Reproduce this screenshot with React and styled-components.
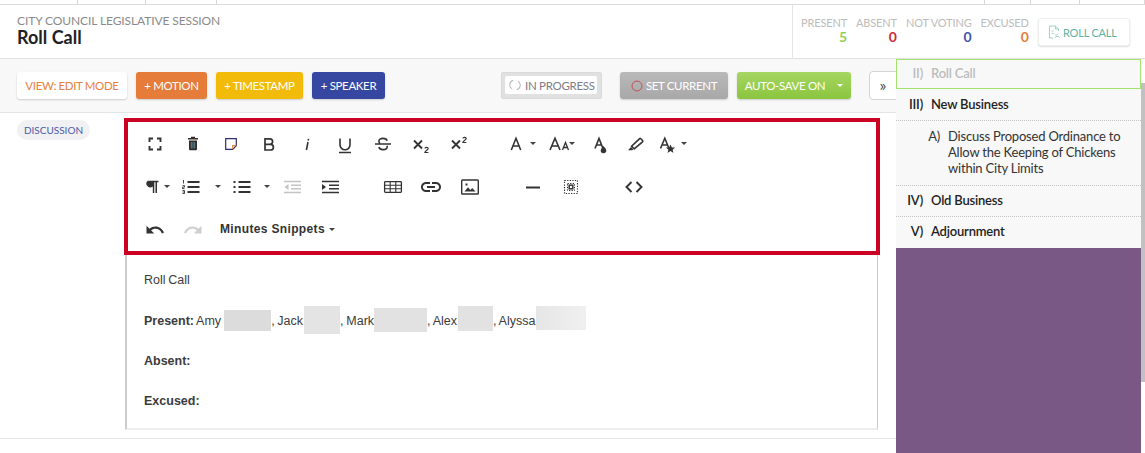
import React from "react";
import styled, { createGlobalStyle } from "styled-components";

const GlobalStyle = createGlobalStyle`
  html, body { margin: 0; padding: 0; background: #fff; }
  body { font-family: "Lato", "Liberation Sans", sans-serif; }
  * { box-sizing: border-box; }
`;

const Page = styled.div`
  width: 1145px;
  height: 453px;
  overflow: hidden;
  display: flex;
  flex-direction: column;
`;

const TopStrip = styled.div`
  height: 5px;
  display: flex;
  border-bottom: 1px solid #dcdcdc;
`;
const StripCell = styled.div`
  width: ${(p) => p.$w}px;
  flex: ${(p) => (p.$grow ? 1 : "none")};
  border-right: ${(p) => (p.$grow ? "none" : "1px solid #d8d8d8")};
`;

const Header = styled.header`
  height: 54px;
  display: flex;
  justify-content: space-between;
  border-bottom: 1px solid #e2e2e2;
`;
const TitleBlock = styled.div`
  padding: 10px 0 0 17px;
`;
const Session = styled.div`
  font-size: 12px;
  line-height: 12px;
  color: #8a8a8a;
  letter-spacing: -0.1px;
`;
const Title = styled.h1`
  margin: 0;
  font-size: 18px;
  line-height: 20px;
  font-weight: 700;
  color: #222;
`;
const StatsBlock = styled.div`
  width: 353px;
  display: flex;
  border-left: 1px solid #e4e4e4;
  padding: 12px 15px 0 8px;
`;
const Stat = styled.div`
  margin-right: ${(p) => p.$mr}px;
  text-align: right;
`;
const StatLabel = styled.div`
  font-size: 11px;
  line-height: 12px;
  color: #bcbcbc;
  letter-spacing: -0.15px;
`;
const StatValue = styled.div`
  font-size: 14px;
  line-height: 15px;
  font-weight: 700;
  color: ${(p) => p.$color};
`;
const RollCallButton = styled.button`
  width: 92px;
  height: 28px;
  margin: 1px 0 0 auto;
  display: flex;
  align-items: center;
  gap: 2px;
  padding: 0 0 0 8px;
  background: #fff;
  border: 1px solid #efefef;
  border-radius: 3px;
  box-shadow: 0 1px 2px rgba(0, 0, 0, 0.14);
  font: 11px "Lato", sans-serif;
  letter-spacing: -0.2px;
  color: #5fb3a1;
`;

const Body = styled.div`
  flex: 1;
  display: flex;
  min-height: 0;
`;
const Main = styled.main`
  width: 896px;
  display: flex;
  flex-direction: column;
`;
const ActionBar = styled.div`
  height: 54px;
  flex: none;
  display: flex;
  align-items: center;
  padding: 0 0 0 17px;
  background: #f8f8f8;
  border-bottom: 1px solid #e4e4e4;
  overflow: hidden;
`;
const ActionButton = styled.button`
  height: 27px;
  width: ${(p) => p.$w}px;
  margin-left: ${(p) => p.$ml || 0}px;
  flex: none;
  display: flex;
  align-items: center;
  justify-content: center;
  gap: ${(p) => p.$gap || 0}px;
  padding: 0;
  border: none;
  border-radius: 3px;
  background: ${(p) => p.$bg};
  color: ${(p) => p.$color || "#fff"};
  box-shadow: 0 1px 2px rgba(0, 0, 0, 0.18);
  font: 11.5px "Lato", sans-serif;
  letter-spacing: -0.35px;
`;
const ProgressFrame = styled.div`
  width: 101px;
  height: 27px;
  margin-left: 116px;
  flex: none;
  padding: 3px 4px 4px 3px;
  background: #e1e1e1;
  border-radius: 2px;
  border: 1px solid #dadada;
`;
const ProgressInner = styled.div`
  height: 100%;
  display: flex;
  align-items: center;
  gap: 4px;
  padding-left: 4px;
  background: #fff;
  border-radius: 2px;
  font-size: 11.5px;
  letter-spacing: -0.3px;
  white-space: nowrap;
  color: #7c7c88;
`;
const Chevrons = styled.button`
  width: 40px;
  height: 29px;
  margin-left: 18px;
  flex: none;
  padding: 0 12px 3px 0;
  background: #fff;
  border: 1px solid #d4d4d4;
  border-radius: 4px;
  font: 16px "Lato", sans-serif;
  color: #444;
`;
const SmallCaret = styled.span`
  display: inline-block;
  width: 0;
  height: 0;
  margin-left: ${(p) => p.$ml || 0}px;
  border-left: 3px solid transparent;
  border-right: 3px solid transparent;
  border-top: 3px solid ${(p) => p.$color || "#444"};
`;

const Content = styled.div`
  flex: 1;
  margin-bottom: 14px;
  display: flex;
  border-bottom: 1px solid #e8e8e8;
`;
const TagColumn = styled.div`
  width: 124px;
  flex: none;
  padding: 7px 0 0 17px;
`;
const Tag = styled.div`
  width: 73px;
  height: 20px;
  line-height: 20px;
  text-align: center;
  background: #f1f1f3;
  border-radius: 10px;
  font-size: 10px;
  color: #4a5ba8;
`;
const EditorColumn = styled.div`
  width: 756px;
  padding-top: 5px;
`;
const ToolFrame = styled.div`
  height: 137px;
  border: 4px solid #cc0022;
`;
const ToolRow = styled.div`
  height: 43px;
  display: flex;
  align-items: center;
  padding-left: 8px;
`;
const ToolButton = styled.div`
  width: ${(p) => p.$w || 38}px;
  margin-left: ${(p) => p.$ml || 0}px;
  height: 28px;
  flex: none;
  display: flex;
  align-items: center;
  justify-content: ${(p) => p.$justify || "center"};
`;
const IconSvg = styled.svg.attrs({ viewBox: "0 0 24 24" })`
  width: 24px;
  height: 24px;
  flex: none;
  color: ${(p) => p.$color || "#333"};
  fill: none;
  stroke: currentColor;
  stroke-width: ${(p) => p.$sw || 1.6};
`;
const Solid = styled.path`
  fill: currentColor;
  stroke: none;
`;
const Snippets = styled.span`
  font: 700 12px "Liberation Sans", sans-serif;
  color: #333;
  margin-left: 8px;
  padding-bottom: 2px;
  white-space: nowrap;
  letter-spacing: 0.35px;
`;
const EditorBody = styled.div`
  width: 753px;
  height: 175px;
  margin-left: 1px;
  padding: 5px 0 0 17px;
  border-left: 2px solid #ccc;
  border-right: 1px solid #ccc;
  border-bottom: 2px solid #eee;
  font-family: "Liberation Sans", Arial, sans-serif;
  font-size: 12.5px;
  word-spacing: -0.7px;
  color: #3c3c3c;
`;
const Line = styled.p`
  margin: 0;
  height: 40px;
  line-height: 40px;
  white-space: nowrap;
  &:first-child {
    margin-bottom: 1px;
  }
`;
const Redacted = styled.span`
  display: inline-block;
  width: ${(p) => p.$w}px;
  height: ${(p) => p.$h}px;
  margin-left: ${(p) => p.$ml || 0}px;
  vertical-align: ${(p) => p.$va}px;
  background: ${(p) => p.$bg};
`;

const Side = styled.aside`
  position: relative;
  width: 249px;
  flex: none;
  padding-right: 4px;
  display: flex;
  flex-direction: column;
`;
const ScrollThumb = styled.div`
  position: absolute;
  top: 24px;
  right: 0;
  width: 4px;
  height: 299px;
  background: #c1c1c1;
`;
const AgendaList = styled.div`
  background: #f8f8f8;
  flex: none;
`;
const AgendaItem = styled.div`
  display: flex;
  height: ${(p) => p.$h || 31}px;
  padding-top: ${(p) => p.$pt || 7}px;
  font-size: 13px;
  line-height: 16px;
  font-weight: ${(p) => (p.$sub ? 400 : 600)};
  color: ${(p) => (p.$active ? "#bcbcbc" : p.$sub ? "#333" : "#222")};
  letter-spacing: -0.2px;
  border: ${(p) => (p.$active ? "1px solid #a5e36f" : "none")};
  border-bottom: ${(p) => (p.$active ? "1px solid #a5e36f" : p.$dotted ? "1px dotted #c4c4c4" : "none")};
`;
const AgendaNumber = styled.span`
  width: ${(p) => p.$w}px;
  flex: none;
  text-align: right;
`;
const AgendaText = styled.span`
  margin-left: 8px;
  width: ${(p) => p.$w || 200}px;
`;
const Purple = styled.div`
  flex: 1;
  background: #7a5885;
`;

const Fullscreen = () => (
  <IconSvg $sw={1.9}><path d="M6.5 10V6.5H10M14 6.5h3.5V10M17.5 14v3.5H14M10 17.5H6.5V14" /></IconSvg>
);
const Trash = () => (
  <IconSvg $color="#332a2a">
    <Solid d="M7 6h3V4.8h4V6h3v1.6H7zM8 8.4h8V17a1.2 1.2 0 0 1-1.2 1.2H9.200A1.200 1.200 0 0 1 8 17z" />
    <path d="M10.300 10v6.500M12 10v6.500M13.700 10v6.500" stroke="#5e9fb0" strokeWidth="0.8" />
  </IconSvg>
);
const Note = () => (
  <IconSvg $sw={1.2} $color="#2b2f6e">
    <path d="M6.700 6.700h10.600v7l-3.600 3.600h-7z" />
    <path d="M13.700 17.300v-3.600h3.600" stroke="#d9893f" />
  </IconSvg>
);
const Bold = () => (
  <IconSvg $sw={1.7}><path d="M8 6.800h4.800a2.800 2.800 0 0 1 0 5.600H8zM8 12.400h5.600a2.800 2.800 0 0 1 0 5.600H8z" /></IconSvg>
);
const Italic = () => (
  <IconSvg><path d="M13 10 11.400 18M13.500 6.800l-.3 1.700" /></IconSvg>
);
const Underline = () => (
  <IconSvg><path d="M7 6.500v6.300a5 5 0 0 0 10 0V6.500M6 20.500h12" /></IconSvg>
);
const Strike = () => (
  <IconSvg>
    <path d="M16.200 8.800c-.4-1.500-2-2.400-4.200-2.400-2.400 0-4.100 1.100-4.100 2.800 0 .9.400 1.500 1 2M8 15c.3 1.700 1.800 2.600 4 2.600 2.500 0 4.200-1 4.200-2.800 0-.4-.1-.7-.2-1M4 12h16" />
  </IconSvg>
);
const Subscript = () => (
  <IconSvg>
    <path d="M5 8.500 13 16.500M13 8.500 5 16.500" strokeWidth="1.800" />
    <path d="M15.800 16.400c.3-1.500 3.400-1.500 3.400.2 0 1.300-3.200 2-3.400 3.900h3.600" strokeWidth="1.200" />
  </IconSvg>
);
const Superscript = () => (
  <IconSvg>
    <path d="M5 8.500 13 16.500M13 8.500 5 16.500" strokeWidth="1.800" />
    <path d="M15.800 6.400c.3-1.500 3.400-1.500 3.400.2 0 1.300-3.200 2-3.400 3.900h3.600" strokeWidth="1.200" />
  </IconSvg>
);
const LetterA = () => (
  <IconSvg><path d="M7.300 18 12 6.300 16.700 18M8.800 14h6.400" /></IconSvg>
);
const FontSize = () => (
  <IconSvg>
    <path d="M1 18 6 6.300 11 18M2.600 14h6.800" />
    <path d="M13.500 18l3-7.500 3 7.500M14.500 15.500h4" strokeWidth="1.300" />
  </IconSvg>
);
const FillColor = () => (
  <IconSvg>
    <path d="M7 16.500 11 6.500 15 16.500M8.500 13h5" />
    <Solid d="M15.500 14c1.200 1.800 2.800 3 2.800 4.500a2.800 2.800 0 0 1-5.600 0c0-1.500 1.600-2.700 2.800-4.500z" />
  </IconSvg>
);
const Highlighter = () => (
  <IconSvg>
    <path d="M10.200 16.800 7.600 14.200 15.400 6.800a1 1 0 0 1 1.400 0l1.700 1.700a1 1 0 0 1 0 1.400z" />
    <Solid d="M4 18.200 7 15l2.300 2.300-1 .9z" />
  </IconSvg>
);
const StarA = () => (
  <IconSvg>
    <path d="M5.500 16.500 9.800 6.300 14 16.500M7 13h5.600" />
    <Solid d="M15.500 12.500l1.400 3h3.200l-2.500 2.200.9 3.300-3-1.900-3 1.900.9-3.300-2.500-2.200h3.200z" />
  </IconSvg>
);
const Pilcrow = () => (
  <IconSvg>
    <Solid d="M17.500 5.700v1.500H16V18h-1.500V7.200h-1.200V18h-1.500v-6.300h-.6A3 3 0 0 1 7 5.700z" />
  </IconSvg>
);
const OrderedList = () => (
  <IconSvg $sw={2}>
    <path d="M8.500 7h12M8.500 12h12M8.500 17h12" />
    <path d="M4.500 5v3.500M3.500 10.600h2v1.500h-2v1.500h2M3.500 15.500h2v3h-2M3.500 17h2" strokeWidth="0.900" />
  </IconSvg>
);
const BulletList = () => (
  <IconSvg $sw={2}>
    <path d="M8.500 7h12M8.500 12h12M8.500 17h12" />
    <Solid d="M3.500 6h2v2h-2zM3.500 11h2v2h-2zM3.500 16h2v2h-2z" />
  </IconSvg>
);
const Outdent = () => (
  <IconSvg $color="#c4c4c4" $sw={1.4}>
    <path d="M4 6.500h17M11 10.200h10M11 13.800h10M4 17.500h17" />
    <Solid d="M8.500 9v6l-4-3z" />
  </IconSvg>
);
const Indent = () => (
  <IconSvg $sw={1.4}>
    <path d="M4 6.500h17M11 10.200h10M11 13.800h10M4 17.500h17" strokeWidth="1.600" />
    <Solid d="M4 9v6l4-3z" />
  </IconSvg>
);
const TableIcon = () => (
  <IconSvg $sw={1.1}>
    <rect x="3.600" y="6.600" width="16.800" height="10.800" rx="0.800" strokeWidth="1.300" />
    <path d="M3.600 10.200h16.800M3.600 13.800h16.800M9.200 6.600v10.800M14.800 6.600v10.800" />
  </IconSvg>
);
const LinkIcon = () => (
  <IconSvg>
    <Solid d="M3.900 12c0-1.710 1.390-3.100 3.100-3.100h4V7H7c-2.760 0-5 2.240-5 5s2.240 5 5 5h4v-1.900H7c-1.710 0-3.100-1.390-3.100-3.100zM8 13h8v-2H8v2zm9-6h-4v1.900h4c1.710 0 3.100 1.390 3.100 3.100s-1.390 3.100-3.100 3.100h-4V17h4c2.760 0 5-2.240 5-5s-2.240-5-5-5z" />
  </IconSvg>
);
const ImageIcon = () => (
  <IconSvg $sw={1.4}>
    <rect x="3.700" y="5" width="16.600" height="14" rx="0.800" />
    <Solid d="M6.500 16.500l3.500-4.200 2.300 2.600 1.900-1.900 3.300 3.500z" />
    <Solid d="M7.500 8.500h2v2h-2z" />
  </IconSvg>
);
const HorizontalRule = () => (
  <IconSvg $sw={2}><path d="M5 12.500h14" /></IconSvg>
);
const SelectAll = () => (
  <IconSvg $sw={1.2}>
    <path d="M5.500 5.500h13v13h-13z" strokeDasharray="1.300 1.300" strokeWidth="1.100" />
    <path d="M8.500 8.500h7v7h-7z" strokeDasharray="1.300 1.300" strokeWidth="1" />
    <rect x="10.200" y="10.200" width="3.600" height="3.600" strokeWidth="1.500" />
  </IconSvg>
);
const CodeIcon = () => (
  <IconSvg $sw={1.900}><path d="M9.500 7 4.500 12l5 5M14.500 7l5 5-5 5" /></IconSvg>
);
const Undo = () => (
  <IconSvg>
    <g transform="translate(1.800 1.800) scale(.85)">
      <Solid d="M12.500 8c-2.650 0-5.050.990-6.900 2.600L2 7v9h9l-3.620-3.620c1.390-1.160 3.160-1.880 5.120-1.880 3.540 0 6.550 2.310 7.600 5.500l2.370-.780C21.080 11.030 17.150 8 12.500 8z" />
    </g>
  </IconSvg>
);
const Redo = () => (
  <IconSvg $color="#cfcfcf">
    <g transform="translate(1.800 1.800) scale(.85)">
      <Solid d="M18.400 10.600C16.550 8.990 14.150 8 11.500 8c-4.650 0-8.580 3.030-9.960 7.220L3.900 16c1.050-3.190 4.050-5.500 7.600-5.500 1.950 0 3.730.720 5.120 1.880L13 16h9V7l-3.600 3.600z" />
    </g>
  </IconSvg>
);

const Ring = styled.svg.attrs({ viewBox: "0 0 14 14" })`
  width: ${(p) => p.$size}px;
  height: ${(p) => p.$size}px;
  flex: none;
  fill: none;
`;

const stats = [
  { label: "PRESENT", value: 5, color: "#93d050", mr: 9 },
  { label: "ABSENT", value: 0, color: "#cc2a3a", mr: 9 },
  { label: "NOT VOTING", value: 0, color: "#3f55a8", mr: 9 },
  { label: "EXCUSED", value: 0, color: "#e57c3a", mr: 0 },
];

export default function App() {
  return (
    <Page>
      <GlobalStyle />
      <TopStrip>
        <StripCell $w={78} />
        <StripCell $w={68} />
        <StripCell $w={71} />
        <StripCell $grow />
        <StripCell $w={75} />
        <StripCell $w={46} />
        <StripCell $w={49} />
        <StripCell $w={65} />
      </TopStrip>
      <Header>
        <TitleBlock>
          <Session>CITY COUNCIL LEGISLATIVE SESSION</Session>
          <Title>Roll Call</Title>
        </TitleBlock>
        <StatsBlock>
          {stats.map((s) => (
            <Stat key={s.label} $mr={s.mr}>
              <StatLabel>{s.label}</StatLabel>
              <StatValue $color={s.color}>{s.value}</StatValue>
            </Stat>
          ))}
          <RollCallButton>
            <Ring $size={14}>
              <path d="M2.500 1h6l3 3v2M2.500 1v12H6M8.500 1v3h3M4.500 6h2M4.500 8.500h2M8 9.500l1 1 2-2M8 13l1-1.500h2.500L13 13" stroke="#8cc7ba" strokeWidth="0.800" />
            </Ring>
            ROLL CALL
          </RollCallButton>
        </StatsBlock>
      </Header>
      <Body>
        <Main>
          <ActionBar>
            <ActionButton $w={110} $bg="#fff" $color="#e8803f">VIEW: EDIT MODE</ActionButton>
            <ActionButton $w={71} $ml={9} $bg="#e57c3a">+ MOTION</ActionButton>
            <ActionButton $w={87} $ml={9} $bg="#f2bb0a">+ TIMESTAMP</ActionButton>
            <ActionButton $w={73} $ml={9} $bg="#3547a1">+ SPEAKER</ActionButton>
            <ProgressFrame>
              <ProgressInner>
                <Ring $size={12}>
                  <path d="M5 1.500A5.500 5.500 0 0 0 3.500 11.500M9 12.500A5.500 5.500 0 0 0 10.500 2.500" stroke="#b8b8b8" strokeWidth="1.200" />
                </Ring>
                IN PROGRESS
              </ProgressInner>
            </ProgressFrame>
            <ActionButton $w={108} $ml={18} $gap={3} $bg="linear-gradient(#b9b9b9, #a8a8a8)">
              <Ring $size={12}>
                <circle cx="7" cy="7" r="5.800" stroke="#c7484c" strokeWidth="1.100" />
              </Ring>
              SET CURRENT
            </ActionButton>
            <ActionButton $w={114} $ml={9} $bg="linear-gradient(#a6d662, #8bc53f)">
              AUTO-SAVE ON
              <SmallCaret $ml={12} $color="#fff" />
            </ActionButton>
            <Chevrons>»</Chevrons>
          </ActionBar>
          <Content>
            <TagColumn>
              <Tag>DISCUSSION</Tag>
            </TagColumn>
            <EditorColumn>
              <ToolFrame>
                <ToolRow>
                  <ToolButton><Fullscreen /></ToolButton>
                  <ToolButton><Trash /></ToolButton>
                  <ToolButton><Note /></ToolButton>
                  <ToolButton><Bold /></ToolButton>
                  <ToolButton><Italic /></ToolButton>
                  <ToolButton><Underline /></ToolButton>
                  <ToolButton><Strike /></ToolButton>
                  <ToolButton><Subscript /></ToolButton>
                  <ToolButton><Superscript /></ToolButton>
                  <ToolButton $w={38} $ml={26} $justify="flex-start"><LetterA /><SmallCaret $ml={2} /></ToolButton>
                  <ToolButton $w={39}><FontSize /><SmallCaret $ml={-4} /></ToolButton>
                  <ToolButton $w={38}><FillColor /></ToolButton>
                  <ToolButton $w={34}><Highlighter /></ToolButton>
                  <ToolButton $w={36}><StarA /><SmallCaret $ml={2} /></ToolButton>
                </ToolRow>
                <ToolRow>
                  <ToolButton $w={38}><Pilcrow /><SmallCaret $ml={-1} /></ToolButton>
                  <ToolButton $w={47} $justify="flex-end"><OrderedList /><SmallCaret $ml={12} /></ToolButton>
                  <ToolButton $w={49} $justify="flex-end"><BulletList /><SmallCaret $ml={10} /></ToolButton>
                  <ToolButton $w={38} $ml={3}><Outdent /></ToolButton>
                  <ToolButton $w={38}><Indent /></ToolButton>
                  <ToolButton $ml={25}><TableIcon /></ToolButton>
                  <ToolButton><LinkIcon /></ToolButton>
                  <ToolButton $ml={1}><ImageIcon /></ToolButton>
                  <ToolButton $ml={25}><HorizontalRule /></ToolButton>
                  <ToolButton><SelectAll /></ToolButton>
                  <ToolButton $ml={25}><CodeIcon /></ToolButton>
                </ToolRow>
                <ToolRow>
                  <ToolButton><Undo /></ToolButton>
                  <ToolButton><Redo /></ToolButton>
                  <Snippets>Minutes Snippets</Snippets>
                  <SmallCaret $ml={4} />
                </ToolRow>
              </ToolFrame>
              <EditorBody>
                <Line>Roll Call</Line>
                <Line>
                  <b>Present:</b> Amy
                  <Redacted $w={47} $h={21} $ml={3} $va={-6} $bg="#dcdcdc" />, Jack
                  <Redacted $w={36} $h={28} $ml={1} $va={-9} $bg="#e4e4e4" />, Mark
                  <Redacted $w={53} $h={24} $ml={0} $va={-7} $bg="#e2e2e2" />, Alex
                  <Redacted $w={35} $h={25} $ml={1} $va={-6} $bg="#e2e2e2" />, Alyssa
                  <Redacted $w={50} $h={24} $ml={1} $va={-5} $bg="linear-gradient(90deg, #e6e6e6, #f0f0f0)" />
                </Line>
                <Line><b>Absent:</b></Line>
                <Line><b>Excused:</b></Line>
              </EditorBody>
            </EditorColumn>
          </Content>
        </Main>
        <Side>
          <ScrollThumb />
          <AgendaList>
            <AgendaItem $active $h={30} $pt={5}>
              <AgendaNumber $w={26}>II)</AgendaNumber>
              <AgendaText>Roll Call</AgendaText>
            </AgendaItem>
            <AgendaItem $dotted $h={32}>
              <AgendaNumber $w={27}>III)</AgendaNumber>
              <AgendaText>New Business</AgendaText>
            </AgendaItem>
            <AgendaItem $sub $dotted $h={65} $pt={7}>
              <AgendaNumber $w={44}>A)</AgendaNumber>
              <AgendaText $w={180}>Discuss Proposed Ordinance to Allow the Keeping of Chickens within City Limits</AgendaText>
            </AgendaItem>
            <AgendaItem $dotted $h={31} $pt={6}>
              <AgendaNumber $w={27}>IV)</AgendaNumber>
              <AgendaText>Old Business</AgendaText>
            </AgendaItem>
            <AgendaItem $h={31} $pt={6}>
              <AgendaNumber $w={27}>V)</AgendaNumber>
              <AgendaText>Adjournment</AgendaText>
            </AgendaItem>
          </AgendaList>
          <Purple />
        </Side>
      </Body>
    </Page>
  );
}
